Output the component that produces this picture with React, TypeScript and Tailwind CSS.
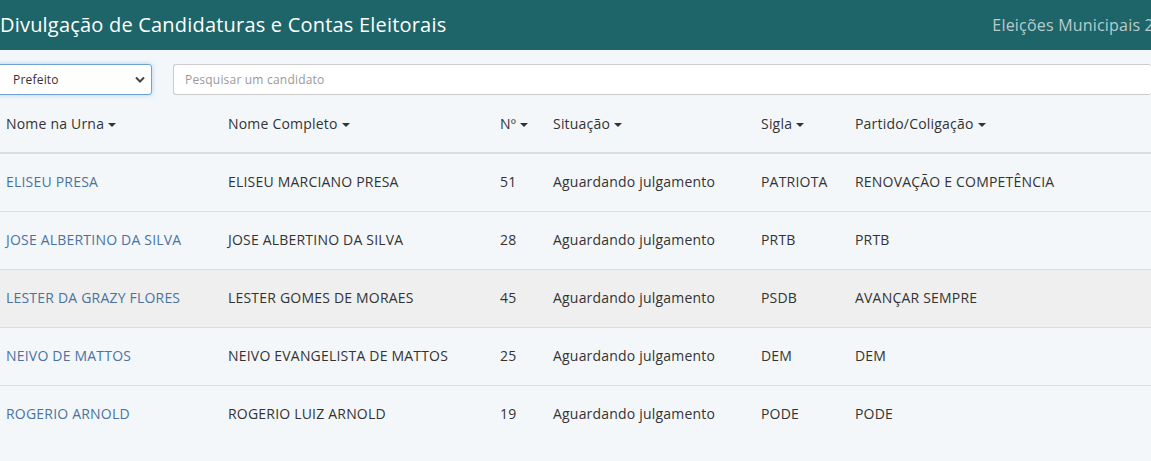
import React from "react";

type Row = {
  urna: string;
  completo: string;
  numero: string;
  situacao: string;
  sigla: string;
  partido: string;
};

const rows: Row[] = [
  { urna: "ELISEU PRESA", completo: "ELISEU MARCIANO PRESA", numero: "51", situacao: "Aguardando julgamento", sigla: "PATRIOTA", partido: "RENOVAÇÃO E COMPETÊNCIA" },
  { urna: "JOSE ALBERTINO DA SILVA", completo: "JOSE ALBERTINO DA SILVA", numero: "28", situacao: "Aguardando julgamento", sigla: "PRTB", partido: "PRTB" },
  { urna: "LESTER DA GRAZY FLORES", completo: "LESTER GOMES DE MORAES", numero: "45", situacao: "Aguardando julgamento", sigla: "PSDB", partido: "AVANÇAR SEMPRE" },
  { urna: "NEIVO DE MATTOS", completo: "NEIVO EVANGELISTA DE MATTOS", numero: "25", situacao: "Aguardando julgamento", sigla: "DEM", partido: "DEM" },
  { urna: "ROGERIO ARNOLD", completo: "ROGERIO LUIZ ARNOLD", numero: "19", situacao: "Aguardando julgamento", sigla: "PODE", partido: "PODE" },
];

const Caret = () => (
  <span className="ml-[4px] inline-block h-0 w-0 border-x-[4px] border-t-[4px] border-x-transparent border-t-[#333] align-middle" />
);

const Th = ({ label }: { label: string }) => (
  <th className="px-[6px] text-left font-medium text-[14px] text-[#333]">
    {label}
    <Caret />
  </th>
);

const App = () => {
  return (
    <div className="min-h-[461px] w-[1151px] overflow-hidden bg-[#f4f7fa] font-['Open_Sans',sans-serif] tracking-[0.2px] text-[#333]">
      <header className="flex h-[50px] items-center justify-between bg-[#1d6569]">
        <h1 className="whitespace-nowrap text-[20px] font-normal text-white">
          Divulgação de Candidaturas e Contas Eleitorais
        </h1>
        <span className="mr-[-31px] whitespace-nowrap text-[16px] text-[#b8cccd]">
          Eleições Municipais 2020
        </span>
      </header>

      <div className="mt-[14px] flex items-center gap-[21px]">
        <div className="ml-[-14px] flex h-[31px] w-[166px] items-center justify-between rounded-[3px] border border-[#6fa3d6] bg-white pl-[26px] pr-[6px] shadow-[0_0_5px_rgba(102,175,233,0.5)]">
          <span className="text-[12px] text-[#333]">Prefeito</span>
          <svg width="10" height="7" viewBox="0 0 10 7">
            <path d="M1 1.5 L5 5.5 L9 1.5" fill="none" stroke="#444" strokeWidth="2" />
          </svg>
        </div>
        <div className="flex h-[31px] flex-1 items-center rounded-[3px] border border-r-0 border-[#ccc] bg-white pl-[11px]">
          <span className="text-[12px] text-[#999]">Pesquisar um candidato</span>
        </div>
      </div>

      <table className="w-full table-fixed border-collapse">
        <colgroup>
          <col className="w-[222px]" />
          <col className="w-[272px]" />
          <col className="w-[53px]" />
          <col className="w-[208px]" />
          <col className="w-[94px]" />
          <col />
        </colgroup>
        <thead>
          <tr className="h-[58px] border-b-2 border-[#ddd]">
            <Th label="Nome na Urna" />
            <Th label="Nome Completo" />
            <Th label="Nº" />
            <Th label="Situação" />
            <Th label="Sigla" />
            <Th label="Partido/Coligação" />
          </tr>
        </thead>
        <tbody>
          {rows.map((r, i) => (
            <tr
              key={r.numero}
              className={`h-[58px] border-t border-[#ddd] text-[14px] ${i === 2 ? "bg-[#efefef]" : ""}`}
            >
              <td className="whitespace-nowrap px-[6px] pb-[1px] text-[#4a73a0]">{r.urna}</td>
              <td className="whitespace-nowrap px-[6px] pb-[1px]">{r.completo}</td>
              <td className="whitespace-nowrap px-[6px] pb-[1px]">{r.numero}</td>
              <td className="whitespace-nowrap px-[6px] pb-[1px]">{r.situacao}</td>
              <td className="whitespace-nowrap px-[6px] pb-[1px]">{r.sigla}</td>
              <td className="whitespace-nowrap px-[6px] pb-[1px]">{r.partido}</td>
            </tr>
          ))}
        </tbody>
      </table>
    </div>
  );
};

export default App;
